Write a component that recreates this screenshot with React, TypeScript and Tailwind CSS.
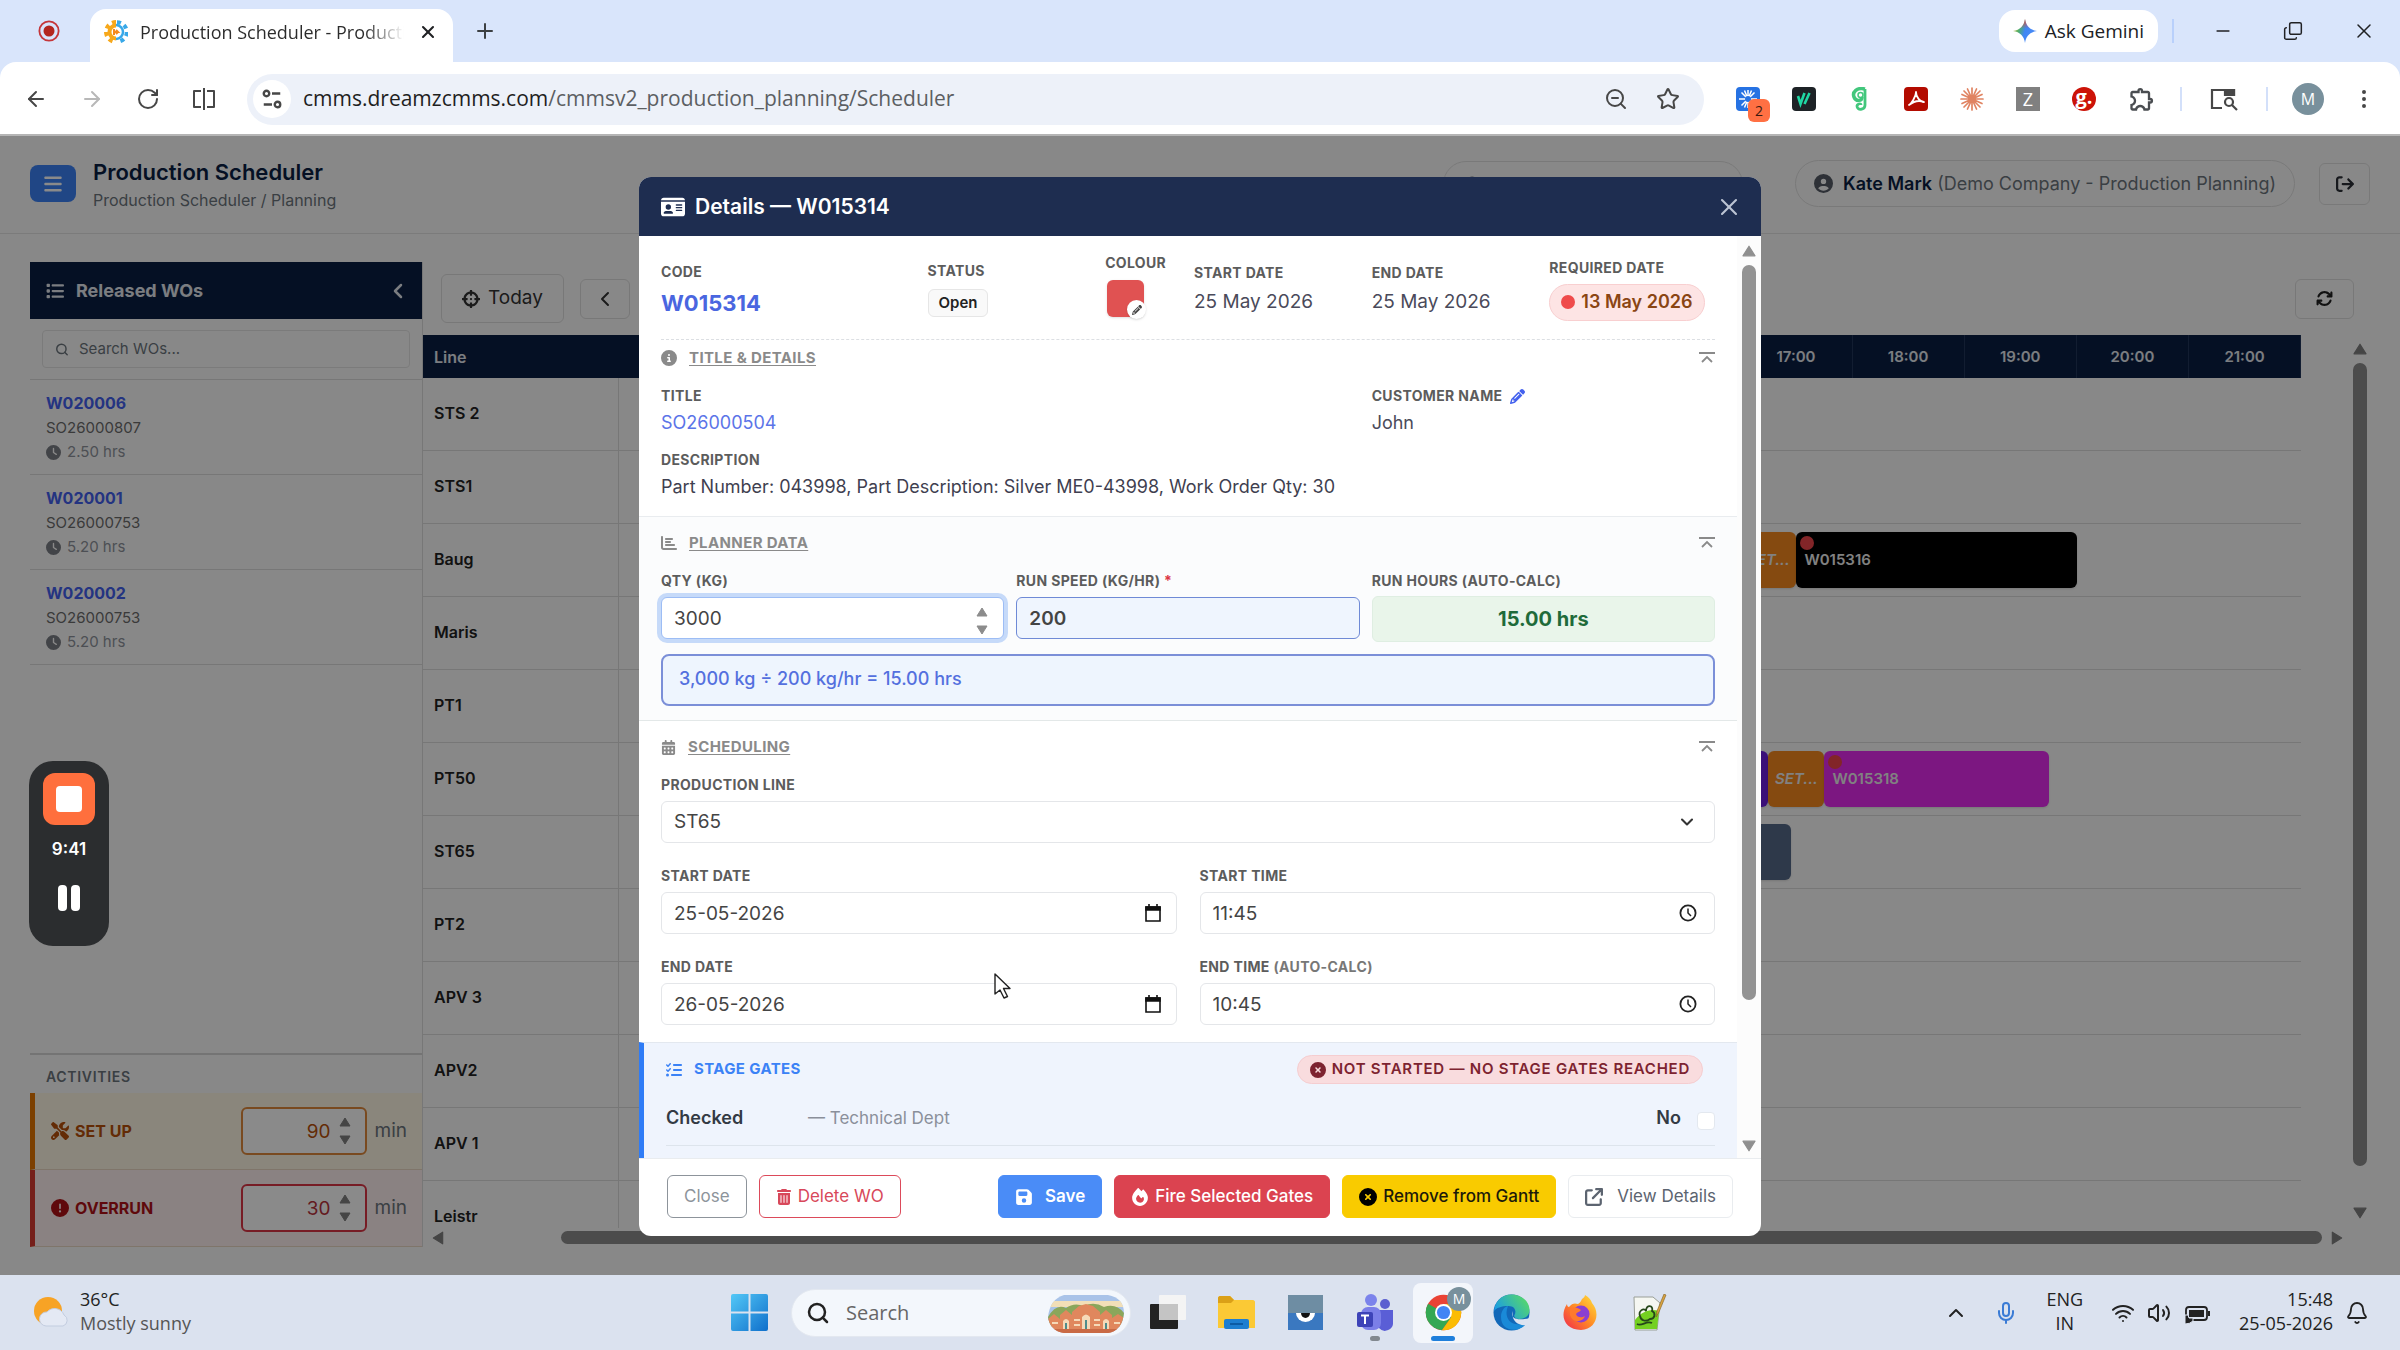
import React, { useState } from "react";
import clsx from "clsx";
import {
  ArrowLeft,
  ArrowRight,
  Bell,
  ChevronDown,
  ChevronLeft,
  ChevronUp,
  Copy,
  Mic,
  Minus,
  MoreVertical,
  Plus,
  RotateCw,
  Search,
  Star,
  Volume2,
  Wifi,
  X,
  ZoomOut,
} from "lucide-react";
import {
  FaArrowRightFromBracket,
  FaArrowsRotate,
  FaArrowUpRightFromSquare,
  FaBars,
  FaCalendarDays,
  FaChartBar,
  FaCircleExclamation,
  FaCircleInfo,
  FaCircleUser,
  FaCircleXmark,
  FaClock,
  FaFire,
  FaFloppyDisk,
  FaIdCard,
  FaList,
  FaListCheck,
  FaPencil,
  FaScrewdriverWrench,
  FaTrashCan,
} from "react-icons/fa6";
import { FaCrosshairs } from "react-icons/fa";
import { MdOutlineExtension } from "react-icons/md";

interface WorkOrder {
  code: string;
  so: string;
  hours: string;
}

interface Bar {
  label: string;
  start: number;
  end: number;
  color: string;
  setup?: boolean;
  late?: boolean;
}

interface Line {
  name: string;
  bars: Bar[];
}

const FIRST_HOUR = 7;
const HOURS = Array.from({ length: 15 }, (_, i) => FIRST_HOUR + i);

const workOrders: WorkOrder[] = [
  { code: "W020006", so: "SO26000807", hours: "2.50 hrs" },
  { code: "W020001", so: "SO26000753", hours: "5.20 hrs" },
  { code: "W020002", so: "SO26000753", hours: "5.20 hrs" },
];

const lines: Line[] = [
  { name: "STS 2", bars: [] },
  { name: "STS1", bars: [] },
  {
    name: "Baug",
    bars: [
      { label: "SET...", start: 17, end: 17.5, color: "bg-[#f58a1f]", setup: true },
      { label: "W015316", start: 17.5, end: 20, color: "bg-black", late: true },
    ],
  },
  { name: "Maris", bars: [] },
  { name: "PT1", bars: [] },
  {
    name: "PT50",
    bars: [
      { label: "", start: 14, end: 17.25, color: "bg-[#6d1fe0]" },
      { label: "SET...", start: 17.25, end: 17.75, color: "bg-[#f58a1f]", setup: true },
      { label: "W015318", start: 17.75, end: 19.75, color: "bg-[#e52bee]", late: true },
    ],
  },
  { name: "ST65", bars: [{ label: "", start: 12, end: 17.45, color: "bg-[#55698a]" }] },
  { name: "PT2", bars: [] },
  { name: "APV 3", bars: [] },
  { name: "APV2", bars: [] },
  { name: "APV 1", bars: [] },
  { name: "Leistr", bars: [] },
];

const Triangle: React.FC<{ className: string }> = ({ className }) => (
  <svg viewBox="0 0 12 10" className={className} fill="currentColor" aria-hidden="true">
    <path d="M6 1 11 9H1Z" stroke="currentColor" strokeLinejoin="round" />
  </svg>
);

/* ---------- browser ---------- */

const GearLogo = () => (
  <svg viewBox="0 0 24 24" className="size-6" fill="none">
    <path d="M12 2.200a9.800 9.800 0 0 0 0 19.600" stroke="#f7a81b" strokeWidth="4.400" strokeDasharray="4 3.700" />
    <path d="M12 5.500a6.500 6.500 0 0 0 0 13" stroke="#f7a81b" strokeWidth="4" />
    <path d="M12 5a7 7 0 0 1 0 14" stroke="#38a8e8" strokeWidth="2.500" />
    <path d="M13 2.200a9.800 9.800 0 0 1 0 19.600" stroke="#38a8e8" strokeWidth="4" strokeDasharray="4 3.700" />
    <path d="M10 9v6m0-3h4l-2-2m2 2-2 2" stroke="#f58a1f" strokeWidth="2" />
  </svg>
);

const GeminiStar = () => (
  <svg viewBox="0 0 24 24" className="size-6">
    <defs>
      <linearGradient id="gem" x1="0" y1="0" x2="1" y2="0.3">
        <stop offset="0" stopColor="#f9c02d" />
        <stop offset="0.35" stopColor="#4fae6b" />
        <stop offset="0.6" stopColor="#3f86f5" />
        <stop offset="1" stopColor="#4a8bf5" />
      </linearGradient>
      <linearGradient id="gemTop" x1="0" y1="0" x2="0" y2="1">
        <stop offset="0" stopColor="#ea4335" />
        <stop offset="0.4" stopColor="#ea4335" stopOpacity="0" />
      </linearGradient>
    </defs>
    <path d="M12 0c1 7 5 11 12 12-7 1-11 5-12 12-1-7-5-11-12-12C7 11 11 7 12 0Z" fill="url(#gem)" />
    <path d="M12 0c1 7 5 11 12 12-7 1-11 5-12 12-1-7-5-11-12-12C7 11 11 7 12 0Z" fill="url(#gemTop)" />
  </svg>
);

const TabStrip = () => (
  <div className="flex h-[62px] items-end bg-[#d9e5fb]">
    <div className="flex h-full w-[90px] items-center justify-center pl-2">
      <svg viewBox="0 0 24 24" className="size-[22px]" fill="none">
        <circle cx="12" cy="12" r="10.5" stroke="#c5363a" strokeWidth="2" />
        <circle cx="12" cy="12" r="6" fill="#b3261e" />
      </svg>
    </div>
    <div className="flex h-[53px] w-[363px] items-center rounded-t-2xl bg-white px-3.5 pb-2">
      <GearLogo />
      <span className="ml-3 w-[264px] overflow-hidden whitespace-nowrap bg-linear-to-r from-[#2b2b2b] from-85% to-transparent bg-clip-text text-lg text-transparent">
        Production Scheduler - Production
      </span>
      <button aria-label="Close tab" className="ml-3.5 text-[#202124]">
        <X className="size-5" strokeWidth={2.5} />
      </button>
    </div>
    <button aria-label="New tab" className="ml-5 flex h-full items-center text-[#3c4043]">
      <Plus className="size-6" />
    </button>
    <div className="ml-auto flex h-full items-center text-[#202124]">
      <button className="flex h-[42px] items-center gap-2 rounded-2xl bg-white px-3.5 text-[19px] font-medium">
        <GeminiStar />
        Ask Gemini
      </button>
      <span className="mx-3.5 h-6 w-0.5 bg-[#b9d0fb]" />
      <button aria-label="Minimize" className="flex w-[70px] justify-center">
        <Minus className="size-5" />
      </button>
      <button aria-label="Restore" className="flex w-[70px] justify-center">
        <Copy className="size-5 -scale-x-100 rotate-180" strokeWidth={1.8} />
      </button>
      <button aria-label="Close window" className="flex w-[72px] justify-center">
        <X className="size-6" strokeWidth={1.5} />
      </button>
    </div>
  </div>
);

const Extensions = () => (
  <div className="flex items-center gap-8">
    <div className="relative">
      <svg viewBox="0 0 24 24" className="size-6">
        <rect width="24" height="24" rx="4" fill="#2672e3" />
        <path d="M12 3v18M3 12h18M5.5 5.5l13 13M18.5 5.5l-13 13M8.500 3.500l7 17M15.500 3.500l-7 17" stroke="#fff" strokeWidth="1.500" />
        <circle cx="12" cy="12" r="3" fill="#2672e3" />
      </svg>
      <span className="absolute top-3 left-3 flex h-[23px] w-[22px] items-center justify-center rounded-md bg-[#ff7043] text-sm text-[#3b1a10]">
        2
      </span>
    </div>
    <svg viewBox="0 0 24 24" className="size-6">
      <rect width="24" height="24" rx="4" fill="#1d2226" />
      <path d="m6 9 2.500 8 4-11M12.500 17l5-11" stroke="#1fd8a4" strokeWidth="2.600" fill="none" />
    </svg>
    <svg viewBox="0 0 24 24" className="size-6" fill="none">
      <path d="M17 2C9 0 4 5 6 10c2 5 8 4 8 0" stroke="#42c77c" strokeWidth="3.500" />
      <circle cx="12.500" cy="8" r="2.500" stroke="#42c77c" strokeWidth="1.500" />
      <path d="M17 2v16c0 5-8 6-8 1 0-2 4-3 4-1" stroke="#42c77c" strokeWidth="2.800" />
    </svg>
    <svg viewBox="0 0 24 24" className="size-6" fill="none">
      <rect width="24" height="24" rx="4" fill="#b30b00" />
      <path d="M5 18c2-1 7-8 7-13 0 5 4 10 8 10-5-2-10-1-15 3Z" stroke="#fff" strokeWidth="1.800" strokeLinejoin="round" />
    </svg>
    <svg viewBox="0 0 24 24" className="size-6">
      <path
        d="M12 1v22M1 12h22M4 4l16 16M20 4 4 20M7.500 2l9 20M16.500 2l-9 20M2 7.500l20 9M2 16.500l20-9"
        stroke="#e08361"
        strokeWidth="1.700"
        strokeLinecap="round"
      />
    </svg>
    <span className="flex size-6 items-center justify-center bg-[#808080] text-lg text-white">Z</span>
    <span className="flex size-6 items-center justify-center rounded-full bg-[#cc1308] pb-1 text-xl font-bold text-white">
      g.
    </span>
    <MdOutlineExtension className="size-7 text-[#4a4d51]" />
  </div>
);

const AddressBar = () => (
  <div className="flex h-[74px] items-center rounded-t-2xl border-b-2 border-[#b5b5b5] bg-white pt-0.5 text-[#474747]">
    <div className="flex items-center gap-8 pl-6">
      <ArrowLeft className="size-6" />
      <ArrowRight className="size-6 text-[#b8b8b8]" />
      <RotateCw className="size-6" />
      <svg viewBox="0 0 24 24" className="size-6" fill="none" stroke="currentColor" strokeWidth="2">
        <path d="M9 4H2v16h7M12 1v22M15 4h7v16h-7" strokeLinejoin="round" />
      </svg>
    </div>
    <div className="ml-[31px] flex h-[51px] flex-1 items-center rounded-full bg-[#edf1f9] pr-6 pl-1.5">
      <span className="flex size-[38px] items-center justify-center rounded-full bg-white">
        <svg viewBox="0 0 24 24" className="size-[22px]" fill="none" stroke="currentColor" strokeWidth="2.600">
          <circle cx="6" cy="6" r="3" />
          <path d="M12 6h9M3 18h9" />
          <circle cx="18" cy="18" r="3" />
        </svg>
      </span>
      <span className="ml-3 flex-1 text-[21px] text-[#5c5f63]">
        <span className="text-[#1f1f1f]">cmms.dreamzcmms.com</span>/cmmsv2_production_planning/Scheduler
      </span>
      <ZoomOut className="mr-7 size-6" />
      <Star className="size-6" />
    </div>
    <div className="flex items-center pr-6 pl-8">
      <Extensions />
      <span className="mr-7 ml-6 h-6 w-0.5 bg-[#d3e0fa]" />
      <svg viewBox="0 0 28 24" className="h-6 w-7" fill="none" stroke="currentColor" strokeWidth="2.200">
        <path d="M12 21H2V3h22v6" />
        <path d="M15 3h9v5h-9z" fill="currentColor" />
        <circle cx="19" cy="15" r="4" />
        <path d="m22 18 5 5" />
      </svg>
      <span className="mr-6 ml-7 h-6 w-0.5 bg-[#d3e0fa]" />
      <span className="flex size-8 items-center justify-center rounded-full bg-[#78909c] text-base text-white">M</span>
      <MoreVertical className="ml-7 size-6" />
    </div>
  </div>
);

/* ---------- scheduler page ---------- */

const PageHeader = () => (
  <header className="flex h-[98px] items-center border-b border-[#e3e3e3] px-[30px] pb-0.5">
    <button aria-label="Menu" className="flex h-[37px] w-[46px] items-center justify-center rounded-lg bg-[#3b82f6] text-white">
      <FaBars className="size-5" />
    </button>
    <div className="ml-[17px]">
      <h1 className="text-[22px] leading-8 font-semibold text-[#0a1f44]">Production Scheduler</h1>
      <p className="text-base leading-6 text-[#6c757d]">Production Scheduler / Planning</p>
    </div>
    <div className="ml-auto flex items-center">
      <label className="mr-[52px] flex h-[46px] w-[300px] items-center rounded-full border border-[#e0e0e0] px-5 text-[#6c757d]">
        <Search className="size-5" />
        <input aria-label="Search" className="ml-3 w-full bg-transparent outline-none" />
      </label>
      <div className="flex h-[47px] items-center gap-2.5 rounded-full border border-[#e0e0e0] px-[18px] text-lg text-[#6c757d]">
        <FaCircleUser className="size-[19px] text-[#555c66]" />
        <span>
          <b className="font-semibold text-[#0a1f44]">Kate Mark</b> (Demo Company - Production Planning)
        </span>
      </div>
      <button aria-label="Sign out" className="ml-6 flex h-[42px] w-[51px] items-center justify-center rounded-md border border-[#e0e0e0] text-[#2b2f36]">
        <FaArrowRightFromBracket className="size-[18px]" />
      </button>
    </div>
  </header>
);

interface ActivityProps {
  label: string;
  minutes: number;
  icon: React.ReactNode;
  rowClass: string;
  inputClass: string;
}

const Activity: React.FC<ActivityProps> = ({ label, minutes, icon, rowClass, inputClass }) => (
  <label className={clsx("flex h-[77px] items-center border-b border-l-[5px] border-b-[#ead9c4] pr-[15px] pl-4", rowClass)}>
    {icon}
    <span className="ml-1.5 flex-1 text-base font-bold">{label}</span>
    <span className="relative">
      <input
        type="number"
        defaultValue={minutes}
        className={clsx(
          "h-12 w-[126px] rounded-md border-2 bg-white pr-[34px] text-right text-[19px] [&::-webkit-inner-spin-button]:appearance-none",
          inputClass,
        )}
      />
      <span className="absolute inset-y-0 right-4 flex flex-col justify-center gap-2 text-[#808080]">
        <Triangle className="h-2.5 w-3" />
        <Triangle className="h-2.5 w-3 rotate-180" />
      </span>
    </span>
    <span className="ml-2 text-[19px] text-[#6c757d]">min</span>
  </label>
);

const Sidebar = () => (
  <aside className="flex w-[393px] shrink-0 flex-col border-r border-[#dcdcdc]">
    <div className="flex h-[57px] shrink-0 items-center bg-[#0a1f44] pr-3 pl-4 text-lg font-bold text-[#e4e8ee]">
      <FaList className="mr-3 size-[18px]" />
      Released WOs
      <ChevronLeft className="ml-auto size-6" strokeWidth={2.5} />
    </div>
    <div className="border-b border-[#dcdcdc] px-3 py-[11px]">
      <label className="flex h-[38px] items-center rounded border border-[#e4e4e4] px-3 text-[#6c757d]">
        <Search className="size-[15px]" strokeWidth={2.5} />
        <input placeholder="Search WOs..." className="ml-2.5 w-full bg-transparent text-[15px] outline-none placeholder:text-[#6c757d]" />
      </label>
    </div>
    <ul className="flex-1">
      {workOrders.map((wo) => (
        <li key={wo.code} className="h-[95px] border-b border-[#dcdcdc] px-4 pt-2.5">
          <p className="text-base leading-[26px] font-bold text-[#4361ee]">{wo.code}</p>
          <p className="text-[15px] leading-6 text-[#6c6c6c]">{wo.so}</p>
          <p className="flex items-center text-[15px] leading-6 text-[#8e939b]">
            <FaClock className="mr-1.5 size-[15px] text-[#7b7e85]" />
            {wo.hours}
          </p>
        </li>
      ))}
    </ul>
    <div className="border-t-2 border-[#d6d6d6]">
      <p className="px-4 pt-3.5 pb-2 text-sm leading-4 font-semibold tracking-wider text-[#6c757d]">ACTIVITIES</p>
      <Activity
        label="SET UP"
        minutes={90}
        icon={<FaScrewdriverWrench className="size-[18px]" />}
        rowClass="border-l-[#e67700] bg-[#fff7e6] text-[#b8500a]"
        inputClass="border-[#e08a3c]"
      />
      <Activity
        label="OVERRUN"
        minutes={30}
        icon={<FaCircleExclamation className="size-[18px]" />}
        rowClass="border-l-[#d93a30] bg-[#fff0f0] text-[#b01217]"
        inputClass="border-[#dc3545] text-[#b8323c]"
      />
    </div>
  </aside>
);

const GanttRow: React.FC<{ line: Line }> = ({ line }) => (
  <div className="flex h-[73px] shrink-0 border-b border-[#dcdcdc]">
    <div className="w-[196px] shrink-0 border-r border-[#dcdcdc] px-[11px] leading-[71px] font-semibold text-[#222]">
      {line.name}
    </div>
    <div className="relative flex-1">
      {line.bars.map((bar) => (
        <div
          key={bar.start}
          className={clsx(
            "absolute top-2 h-14 overflow-hidden rounded-md text-[15px] leading-[56px] font-semibold whitespace-nowrap text-[#eee] shadow",
            bar.color,
            bar.setup ? "text-center italic" : "px-2",
          )}
          style={{
            left: `${((bar.start - FIRST_HOUR) / HOURS.length) * 100}%`,
            width: `${((bar.end - bar.start) / HOURS.length) * 100}%`,
          }}
        >
          {bar.late && <span className="absolute top-1 left-1 size-3.5 rounded-full bg-[#f0454a]" />}
          {bar.label}
        </div>
      ))}
    </div>
  </div>
);

const Gantt = () => (
  <section className="flex min-w-0 flex-1 flex-col pr-2.5">
    <div className="flex h-[73px] items-center gap-4 pl-[18px]">
      <button className="flex h-[49px] items-center gap-2 rounded-md border border-[#dedede] px-5 text-[19px] text-[#333]">
        <FaCrosshairs className="size-[18px]" />
        Today
      </button>
      <button aria-label="Previous" className="flex h-10 w-[50px] items-center justify-center rounded-md border border-[#dedede] text-[#333]">
        <ChevronLeft className="size-6" />
      </button>
      <button aria-label="Refresh" className="mr-5 ml-auto flex h-10 w-[59px] items-center justify-center rounded-md border border-[#dedede] text-[#222]">
        <FaArrowsRotate className="size-[17px]" />
      </button>
    </div>
    <div className="flex min-h-0 flex-1">
      <div className="flex min-w-0 flex-1 flex-col">
        <div className="mr-[45px] flex h-[43px] shrink-0 items-center bg-[#0a1f44] text-[#e4e8ee]">
          <span className="w-[196px] shrink-0 px-[11px] text-base font-semibold">Line</span>
          {HOURS.map((h) => (
            <span key={h} className="flex-1 border-r border-[#22365c] text-center text-[15px] leading-[43px] font-semibold">
              {String(h).padStart(2, "0")}:00
            </span>
          ))}
        </div>
        <div className="mr-[45px] flex min-h-0 flex-1 flex-col overflow-hidden">
          {lines.map((line) => (
            <GanttRow key={line.name} line={line} />
          ))}
        </div>
        <div className="flex h-[19px] items-center text-[#808080]">
          <Triangle className="ml-2 h-3 w-3.5 -rotate-90" />
          <div className="ml-[116px] h-[13px] flex-1 rounded-full bg-[#8c8c8c]" />
          <Triangle className="mr-0.5 ml-2 h-3 w-3.5 rotate-90" />
        </div>
      </div>
      <div className="flex w-7 flex-col items-center pt-2 text-[#808080]">
        <Triangle className="h-3 w-4" />
        <div className="mt-2 h-[803px] w-3.5 rounded-full bg-[#8c8c8c]" />
        <Triangle className="mt-auto mb-7 h-3 w-4 rotate-180" />
      </div>
    </div>
  </section>
);

/* ---------- details dialog ---------- */

const fieldBase = "block h-[42px] w-full rounded-md border px-3 text-[19px] text-[#444] outline-none";

const Caption: React.FC<{ className?: string; children: React.ReactNode }> = ({ className, children }) => (
  <p className={clsx("text-sm leading-5 font-bold tracking-wide whitespace-nowrap text-[#5c5c5c]", className)}>{children}</p>
);

interface FieldProps {
  label: React.ReactNode;
  children: React.ReactNode;
}

const Field: React.FC<FieldProps> = ({ label, children }) => (
  <label className="block">
    <span className="mb-1.5 block text-sm leading-5 font-bold tracking-wide text-[#5c5c5c]">{label}</span>
    <span className="relative block">{children}</span>
  </label>
);

const CollapseIcon = () => (
  <svg viewBox="0 0 16 16" className="size-4" fill="none" stroke="#8a8a8a" strokeWidth="1.800">
    <path d="M0 3h16M3 12l5-5 5 5" />
  </svg>
);

const SectionTitle: React.FC<{ icon: React.ReactNode; children: React.ReactNode }> = ({ icon, children }) => (
  <div className="mb-[18px] flex h-5 items-center justify-between">
    <h3 className="flex items-center text-[15px] font-bold tracking-wide text-[#8a8a8a]">
      {icon}
      <span className="ml-3 underline underline-offset-2">{children}</span>
    </h3>
    <button aria-label="Collapse section">
      <CollapseIcon />
    </button>
  </div>
);

const CalendarGlyph = () => (
  <svg viewBox="0 0 16 18" className="absolute top-3 right-4 h-[18px] w-4" fill="none" stroke="#111" strokeWidth="1.600">
    <path d="M1 3h14v14H1zM4 0v3M12 0v3" />
    <path d="M1 3h14v3H1z" fill="#111" />
  </svg>
);

const ClockGlyph = () => (
  <svg viewBox="0 0 18 18" className="absolute top-3 right-[18px] size-[18px]" fill="none" stroke="#222" strokeWidth="1.800">
    <circle cx="9" cy="9" r="7.600" />
    <path d="M9 4.500V9l3 3" strokeWidth="1.500" />
  </svg>
);

const DetailsDialog = () => {
  const [qty, setQty] = useState(3000);
  const [speed, setSpeed] = useState(200);
  const runHours = (qty / speed).toFixed(2);

  return (
    <div role="dialog" aria-label="Details" className="flex w-[1122px] flex-col overflow-hidden rounded-xl bg-white">
      <div className="flex h-[59px] shrink-0 items-center bg-[#1e2d50] pr-[18px] pl-[22px] text-white">
        <FaIdCard className="size-6" />
        <h2 className="ml-2.5 text-[21px] font-semibold">Details — W015314</h2>
        <button aria-label="Close dialog" className="ml-auto text-[#bcc4d3]">
          <X className="size-7" strokeWidth={1.8} />
        </button>
      </div>

      <div className="flex min-h-0 flex-1">
        <div className="min-w-0 flex-1 overflow-hidden">
          <div className="px-[22px]">
            <div className="grid grid-cols-12 items-center gap-x-3 border-b border-dashed border-[#dcdfe3] pt-[17px] pb-3.5">
              <div className="col-span-3">
                <Caption>CODE</Caption>
                <p className="mt-2 text-[22px] leading-[26px] font-bold text-[#4a66e0]">W015314</p>
              </div>
              <div className="col-span-2">
                <Caption>STATUS</Caption>
                <span className="mt-2 inline-block rounded-md border border-[#e6e6e6] bg-[#f9f9f9] px-2.5 text-[15px] leading-[26px] font-semibold text-[#222]">
                  Open
                </span>
              </div>
              <div className="col-span-1 pb-2">
                <Caption>COLOUR</Caption>
                <button aria-label="Change colour" className="relative mt-[7px] ml-0.5 block size-[37px] rounded-md bg-[#e05252] shadow">
                  <span className="absolute -right-0.5 -bottom-0.5 flex size-[19px] items-center justify-center rounded-full bg-white shadow">
                    <FaPencil className="size-2.5 text-[#444]" />
                  </span>
                </button>
              </div>
              <div className="col-span-2">
                <Caption>START DATE</Caption>
                <p className="mt-1.5 text-[19px] leading-[26px] text-[#4a4a5a]">25 May 2026</p>
              </div>
              <div className="col-span-2">
                <Caption>END DATE</Caption>
                <p className="mt-1.5 text-[19px] leading-[26px] text-[#4a4a5a]">25 May 2026</p>
              </div>
              <div className="col-span-2">
                <Caption>REQUIRED DATE</Caption>
                <p className="mt-1.5 inline-flex h-[37px] items-center rounded-full border border-[#f8cfd0] bg-[#fde4e4] px-[11px] text-lg font-semibold whitespace-nowrap text-[#8a4513]">
                  <span className="mr-1.5 size-3.5 rounded-full bg-[#ef4b4b]" />
                  13 May 2026
                </p>
              </div>
            </div>
          </div>

          <section className="border-b border-[#e9ecef] px-[22px] pt-2 pb-4">
            <SectionTitle icon={<FaCircleInfo className="size-4" />}>TITLE &amp; DETAILS</SectionTitle>
            <div className="grid grid-cols-12 gap-x-3">
              <div className="col-span-8">
                <Caption>TITLE</Caption>
                <a href="#so" className="mt-1 block text-lg leading-[26px] text-[#5b74e8]">
                  SO26000504
                </a>
              </div>
              <div className="col-span-4">
                <Caption className="flex items-center">
                  CUSTOMER NAME
                  <FaPencil className="ml-2 size-[15px] text-[#4361ee]" />
                </Caption>
                <p className="mt-1 text-lg leading-[26px] text-[#4a4a5a]">John</p>
              </div>
            </div>
            <Caption className="mt-3.5">DESCRIPTION</Caption>
            <p className="mt-1 text-lg leading-[26px] text-[#3f3f50]">
              Part Number: 043998, Part Description: Silver ME0-43998, Work Order Qty: 30
            </p>
          </section>

          <section className="border-b border-[#e3e8e8] bg-[#fbfcfd] px-[22px] pt-4 pb-3.5">
            <SectionTitle icon={<FaChartBar className="size-4" />}>PLANNER DATA</SectionTitle>
            <div className="grid h-[72px] grid-cols-3 gap-x-3">
              <Field label="QTY (KG)">
                <input
                  type="number"
                  value={qty}
                  onChange={(e) => setQty(Number(e.target.value))}
                  className={clsx(fieldBase, "border-[#9dbdf5] bg-white ring-4 ring-[#c6daf9] [&::-webkit-inner-spin-button]:appearance-none")}
                />
                <span className="absolute top-2.5 right-4 flex flex-col gap-2 text-[#8c8c8c]">
                  <Triangle className="h-2.5 w-3" />
                  <Triangle className="h-2.5 w-3 rotate-180" />
                </span>
              </Field>
              <Field
                label={
                  <>
                    RUN SPEED (KG/HR) <span className="text-[#dc3545]">*</span>
                  </>
                }
              >
                <input
                  type="number"
                  value={speed}
                  onChange={(e) => setSpeed(Number(e.target.value))}
                  className={clsx(fieldBase, "border-[#6f8ad6] bg-[#eff5fe] font-semibold [&::-webkit-inner-spin-button]:appearance-none")}
                />
              </Field>
              <div>
                <Caption>RUN HOURS (AUTO-CALC)</Caption>
                <output className="mt-[5px] block h-[46px] rounded-md border border-[#dfeee2] bg-[#e9f5ea] text-center text-xl leading-[44px] font-bold text-[#1f6b3a]">
                  {runHours} hrs
                </output>
              </div>
            </div>
            <p className="mt-[11px] h-[52px] rounded-lg border-2 border-[#7b8fd8] bg-[#eef5fe] px-4 text-lg leading-[46px] font-medium text-[#5470de]">
              {qty.toLocaleString("en-US")} kg ÷ {speed} kg/hr = {runHours} hrs
            </p>
          </section>

          <section className="px-[22px] pt-4 pb-[17px]">
            <SectionTitle icon={<FaCalendarDays className="size-[15px]" />}>SCHEDULING</SectionTitle>
            <Field label="PRODUCTION LINE">
              <select defaultValue="ST65" className={clsx(fieldBase, "appearance-none border-[#e4e6e9] bg-white")}>
                <option>ST65</option>
                <option>PT50</option>
              </select>
              <ChevronDown className="pointer-events-none absolute top-[11px] right-[18px] size-5 text-[#333]" strokeWidth={2.5} />
            </Field>
            <div className="mt-[23px] grid grid-cols-2 gap-x-[23px] gap-y-[23px]">
              <Field label="START DATE">
                <input defaultValue="25-05-2026" className={clsx(fieldBase, "border-[#e4e6e9]")} />
                <CalendarGlyph />
              </Field>
              <Field label="START TIME">
                <input defaultValue="11:45" className={clsx(fieldBase, "border-[#e4e6e9]")} />
                <ClockGlyph />
              </Field>
              <Field label="END DATE">
                <input defaultValue="26-05-2026" className={clsx(fieldBase, "border-[#e4e6e9]")} />
                <CalendarGlyph />
              </Field>
              <Field
                label={
                  <>
                    END TIME <span className="text-[#777]">(AUTO-CALC)</span>
                  </>
                }
              >
                <input defaultValue="10:45" className={clsx(fieldBase, "border-[#e4e6e9]")} />
                <ClockGlyph />
              </Field>
            </div>
          </section>

          <section className="h-40 border-t border-l-[5px] border-t-[#e3e8ef] border-l-[#2f7cf6] bg-[#eff4fd] pr-[22px] pl-[22px]">
            <div className="flex items-center justify-between pt-3 pr-3">
              <h3 className="flex items-center text-[15px] font-bold tracking-wide text-[#3b82f6]">
                <FaListCheck className="mr-3 size-4" />
                STAGE GATES
              </h3>
              <span className="flex h-[29px] items-center rounded-full border border-[#f5cdd0] bg-[#f9dcde] px-3 text-[15px] font-semibold tracking-wider text-[#7d2330]">
                <FaCircleXmark className="mr-1.5 size-4" />
                NOT STARTED — NO STAGE GATES REACHED
              </span>
            </div>
            <div className="mt-5 flex h-[42px] border-b border-[#dde4ec] leading-7">
              <span className="w-[142px] text-lg font-semibold text-[#333a44]">Checked</span>
              <span className="flex-1 text-[17px] text-[#8a8f9a]">— Technical Dept</span>
              <label className="flex text-lg font-semibold text-[#333a44]">
                No
                <input type="checkbox" className="mt-2 ml-4 size-[18px] appearance-none rounded border border-[#e3e8ef] bg-white" />
              </label>
            </div>
          </section>
        </div>

        <div className="flex w-6 shrink-0 flex-col items-center bg-[#fcfcfc] pt-[9px] text-[#8f8f8f]">
          <Triangle className="h-3 w-4" />
          <div className="mt-2 h-[735px] w-3.5 rounded-full bg-[#939393]" />
          <Triangle className="mt-auto mb-1.5 h-3 w-4 rotate-180" />
        </div>
      </div>

      <div className="flex h-[78px] shrink-0 items-center gap-3 border-t border-[#e9ecef] px-7 pb-0.5 text-[17px] whitespace-nowrap *:flex *:h-[43px] *:items-center *:rounded-md *:border *:px-4">
        <button className="border-[#8d949b] text-[#8d949b]">Close</button>
        <button className="mr-auto border-[#dc4a5a] text-[#d8485a]">
          <FaTrashCan className="mr-1.5 size-4" />
          Delete WO
        </button>
        <button className="border-[#4a8cf7] bg-[#4a8cf7] font-semibold text-white">
          <FaFloppyDisk className="mr-3 size-[18px]" />
          Save
        </button>
        <button className="border-[#db4350] bg-[#db4350] font-medium text-white">
          <FaFire className="mr-1.5 size-[18px]" />
          Fire Selected Gates
        </button>
        <button className="border-[#f9cb00] bg-[#f9cb00] font-medium text-[#1c1a0a]">
          <FaCircleXmark className="mr-1.5 size-[18px] text-black" />
          Remove from Gantt
        </button>
        <button className="border-[#e9ecef] text-[#5c6470]">
          <FaArrowUpRightFromSquare className="mr-3.5 size-[18px]" />
          View Details
        </button>
      </div>
    </div>
  );
};

const Recorder = () => (
  <div className="absolute top-[625px] left-[29px] flex h-[185px] w-20 flex-col items-center rounded-3xl bg-[#2b2d2f] pt-3 text-white">
    <button aria-label="Stop recording" className="flex size-[52px] items-center justify-center rounded-xl bg-[#ff6f3d]">
      <span className="size-[26px] rounded bg-white" />
    </button>
    <span className="mt-3 text-[17px] leading-6 font-semibold">9:41</span>
    <button aria-label="Pause recording" className="mt-6 flex gap-1">
      <span className="h-[26px] w-[9px] rounded bg-white" />
      <span className="h-[26px] w-[9px] rounded bg-white" />
    </button>
  </div>
);

const Cursor = () => (
  <svg viewBox="0 0 18 26" className="absolute top-[837px] left-[994px] h-[26px] w-[18px]" fill="#fff" stroke="#222" strokeWidth="1.400">
    <path d="M1 1v20l5-4 4 8 3.500-1.500-4-8H16Z" strokeLinejoin="round" />
  </svg>
);

/* ---------- taskbar ---------- */

const TaskbarApps = () => (
  <div className="flex items-center gap-8">
    <svg viewBox="0 0 37 37" className="size-[37px]">
      <rect x="1" y="10" width="28" height="25" rx="1" fill="#222" />
      <rect x="10" y="1" width="27" height="25" rx="1" fill="#f4f4f4" />
      <rect x="10" y="10" width="19" height="16" fill="#c4c4c4" />
    </svg>
    <svg viewBox="0 0 37 37" className="size-[37px]">
      <path d="M0 4c0-1 1-2 2-2h10l4 4h19c1 0 2 1 2 2v26H0Z" fill="#fbc935" />
      <path d="M0 4c0-1 1-2 2-2h10l4 4-3 3H0Z" fill="#dba017" />
      <rect x="6" y="25" width="25" height="10" rx="2" fill="#1d7ed0" />
      <path d="M12 30h13" stroke="#0c5ba4" strokeWidth="2" />
    </svg>
    <svg viewBox="0 0 37 37" className="size-[37px]">
      <rect x="1" y="1" width="35" height="18" fill="#6e8da3" />
      <rect x="1" y="19" width="35" height="17" fill="#3a78c0" />
      <path d="M9 19a9.500 9 0 0 0 19 0Z" fill="#fff" />
      <path d="M14 19a4.500 5 0 0 0 9 0Z" fill="#111" />
    </svg>
    <div className="relative">
      <svg viewBox="0 0 37 37" className="size-[37px]">
        <circle cx="15" cy="6" r="6" fill="#7b83eb" />
        <circle cx="29" cy="10" r="5" fill="#5b5fd0" />
        <path d="M18 16h19v12a8 8 0 0 1-14 6Z" fill="#5a5ed6" />
        <rect x="5" y="13" width="20" height="23" rx="7" fill="#7b7fe8" />
        <rect x="1" y="18" width="16" height="15" rx="2" fill="#3d43b8" />
        <path d="M5 21.500h8M9 21.500v8.500" stroke="#fff" strokeWidth="2" />
      </svg>
      <span className="absolute -bottom-2.5 left-3.5 h-[5px] w-2.5 rounded-full bg-[#82888f]" />
    </div>
    <div className="relative -mx-3 flex h-[60px] w-[60px] items-center justify-center rounded-lg bg-[#f3f6fb]">
      <svg viewBox="0 0 48 48" className="size-[37px]">
        <circle cx="24" cy="24" r="23" fill="#ea4335" />
        <path d="M24 24 4 12.500A23 23 0 0 0 22 47l12-17Z" fill="#34a853" />
        <path d="M24 13h20A23 23 0 0 1 22 47l12-17Z" fill="#fbbc05" />
        <circle cx="24" cy="24" r="11" fill="#fff" />
        <circle cx="24" cy="24" r="8.500" fill="#4285f4" />
      </svg>
      <span className="absolute top-1 right-0.5 flex size-6 items-center justify-center rounded-full bg-[#78909c] text-sm text-white">M</span>
      <span className="absolute bottom-0.5 h-[5px] w-6 rounded-full bg-[#1f7fdb]" />
    </div>
    <svg viewBox="0 0 37 37" className="size-[37px]">
      <defs>
        <linearGradient id="edge" x1="0" y1="0.500" x2="1" y2="0">
          <stop offset="0" stopColor="#1b9de2" />
          <stop offset="1" stopColor="#5fe05a" />
        </linearGradient>
      </defs>
      <circle cx="18.500" cy="18.500" r="18" fill="#1268b8" />
      <path d="M1 17C2 7 9 .5 18.500 .5c10 0 18 7 18 15.500 0 6-5 9-10 9-4 0-6-2-5-4 2-3 1-9-6-9S3 14 1 17Z" fill="url(#edge)" />
      <path d="M15 12c-4 9 0 20 13 18 3 0 5-2 7-4-4 13-27 14-27-3 0-6 3-10 7-11Z" fill="#1a8ad8" />
      <path d="M20 17c-3 5 0 11 17 7v6c-10 4-20-3-17-13Z" fill="#dce3f0" />
    </svg>
    <svg viewBox="0 0 37 37" className="size-[37px]">
      <defs>
        <linearGradient id="fox" x1="1" y1="0" x2="0" y2="1">
          <stop offset="0" stopColor="#ffe43b" />
          <stop offset="0.500" stopColor="#ff8a25" />
          <stop offset="1" stopColor="#f0264f" />
        </linearGradient>
      </defs>
      <path d="M20 5c2-1 3-3 3-4 4 2 6 5 7 8 9 10 4 27-11 27C3 36-3 22 5 10c0 2 1 3 2 3 3-4 6-4 9-3 2-1 3-3 4-5Z" fill="url(#fox)" />
      <circle cx="19" cy="20" r="8.500" fill="#8a3fd1" />
      <path d="M8 15c4-3 8-1 11 1-1 2-4 2-5 4 1 4 6 4 9 2-2 6-12 8-15-1Z" fill="#ff7a2d" />
    </svg>
    <svg viewBox="0 0 37 37" className="size-[37px]">
      <path d="M3 3h19l7 6-3 27H4Z" fill="#f5f7f2" stroke="#9a9f97" />
      <path d="M4 26c6-8 15-12 24-9l-2 18H4Z" fill="#74d021" />
      <path d="M9 22c-2-5 4-9 6-5 0-7 8-6 6 0 4 2 3 8-2 8-4 3-9 2-10-3Zm-3 8c5 3 9-4 15-1" stroke="#26471a" strokeWidth="1.800" fill="none" />
      <path d="m35 1-7 17-3 5 1-6 7-17Z" fill="#d9a33f" stroke="#7d5c20" strokeWidth="0.600" />
    </svg>
  </div>
);

const Taskbar = () => (
  <footer className="flex h-[75px] items-center bg-[#dbe2ef] text-lg text-[#222]">
    <div className="flex w-[731px] items-center pl-8">
      <svg viewBox="0 0 38 34" className="h-[34px] w-[38px]">
        <circle cx="16" cy="15" r="14" fill="#f7a325" />
        <path d="M14 30a7 7 0 0 1 1-14 10 10 0 0 1 17 3 6 6 0 0 1-1 11Z" fill="#e4e9f4" stroke="#c3cde0" />
      </svg>
      <div className="ml-2.5 pb-1 leading-6">
        <p>36°C</p>
        <p className="text-[#555]">Mostly sunny</p>
      </div>
    </div>
    <svg viewBox="0 0 37 37" className="size-[37px]">
      <defs>
        <linearGradient id="win" x1="0" y1="0" x2="1" y2="1">
          <stop offset="0" stopColor="#53c8f7" />
          <stop offset="1" stopColor="#0f6fcb" />
        </linearGradient>
      </defs>
      <path d="M0 2q0-2 2-2h15.500v17.500H0ZM19.500 0H35q2 0 2 2v15.500H19.500ZM0 19.500h17.500V37H2q-2 0-2-2ZM19.500 19.500H37V35q0 2-2 2H19.500Z" fill="url(#win)" />
    </svg>
    <label className="mr-[18px] ml-[23px] flex h-12 w-[340px] items-center rounded-full border border-[#e3e8f0] bg-[#f3f7fc] pr-1.5 pl-3.5">
      <Search className="size-6 text-[#222]" strokeWidth={2.5} />
      <input placeholder="Search" className="ml-4 w-0 flex-1 bg-transparent text-xl outline-none placeholder:text-[#666]" />
      <svg viewBox="0 0 76 40" className="h-10 w-[76px]">
        <clipPath id="pill">
          <path d="M16 2h44q16 3 16 18-2 18-16 20H16Q2 38 0 24 2 6 16 2Z" />
        </clipPath>
        <g clipPath="url(#pill)">
          <rect width="76" height="40" fill="#a9c3e8" />
          <rect y="8" width="76" height="6" fill="#f2dfb8" />
          <path d="M0 24q8-14 18-9 8-6 18-2 10-5 20 1 12-4 20 6v14H0Z" fill="#8aa65b" />
          <path d="M0 26l6-5 6 5v-4l6-5 6 5v-3l7-6 7-2 7 2 7 6v3l6-5 6 5v3l6-4 6 4v15H0Z" fill="#e0875d" />
          <path d="M0 36h76v4H0Z" fill="#c96a45" />
          <path d="M15 36v-8q3-4 6 0v8ZM34 36V24q4-5 8 0v12ZM55 36v-8q3-4 6 0v8Z" fill="#f5d9b8" />
          <path d="M17 36v-6h2v6ZM37 36v-9h2v9ZM57 36v-6h2v6Z" fill="#4e8d8c" />
          <path d="M4 30h6M26 27h6M46 27h6M66 30h6M26 32h6M46 32h6" stroke="#f5d9b8" strokeWidth="2" />
        </g>
      </svg>
    </label>
    <TaskbarApps />
    <div className="ml-auto flex items-center pr-[31px]">
      <ChevronUp className="size-6" />
      <Mic className="ml-[26px] size-6 text-[#3a7bd5]" />
      <div className="ml-7 pb-1 text-center leading-6">
        <p>ENG</p>
        <p>IN</p>
      </div>
      <Wifi className="ml-7 size-6" />
      <Volume2 className="ml-3 size-6" />
      <svg viewBox="0 0 26 22" className="ml-3.5 h-[22px] w-[26px]">
        <rect x="1" y="5" width="21" height="13" rx="3" fill="none" stroke="#222" strokeWidth="1.800" />
        <rect x="4" y="8" width="15" height="7" fill="#222" />
        <path d="M23 9v5h2V9Z" fill="#222" />
        <path d="M0 22v-9h3l1 3h4v3q-3 3-8 3Z" fill="#222" stroke="#dbe2ef" />
      </svg>
      <div className="ml-7 pb-1 text-right leading-6">
        <p>15:48</p>
        <p>25-05-2026</p>
      </div>
      <Bell className="ml-3 size-6" strokeWidth={1.8} />
    </div>
  </footer>
);

const App: React.FC = () => {
  return (
    <div className="flex h-screen w-full flex-col overflow-hidden font-['Open_Sans',sans-serif]">
      <div className="bg-[#d9e5fb]">
        <TabStrip />
        <AddressBar />
      </div>
      <main className="relative flex min-h-0 flex-1 flex-col bg-[#fcfcfc] font-['Inter',sans-serif]">
        <PageHeader />
        <div className="flex min-h-0 flex-1 pt-7 pr-4 pb-7 pl-[30px]">
          <Sidebar />
          <Gantt />
        </div>
        <div className="absolute inset-0 flex justify-center bg-black/46 pt-[41px] pb-[39px]">
          <DetailsDialog />
        </div>
        <Recorder />
        <Cursor />
      </main>
      <Taskbar />
    </div>
  );
};

export default App;
